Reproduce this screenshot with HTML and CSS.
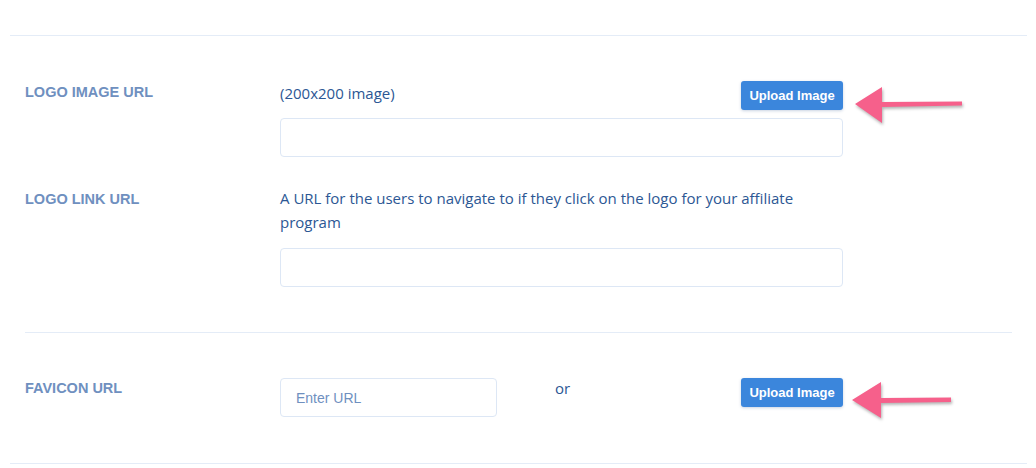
FILE: index.html
```html
<!DOCTYPE html>
<html lang="en">
<head>
    <meta charset="UTF-8">
    <meta name="viewport" content="width=device-width, initial-scale=1.0">
    <title>Branding Settings</title>
    <link rel="stylesheet" href="styles.css">
</head>
<body>
    <div class="page">
      <div class="group">
        <div class="field field-logo">
          <label class="label">LOGO IMAGE URL</label>
          <div class="content">
            <div class="head-row">
              <span class="desc">(200x200 image)</span>
              <button class="upload">Upload Image</button>
            </div>
            <input class="text-input" type="text">
          </div>
          <svg class="arrow arrow-one" width="116" height="44" viewBox="0 0 116 44">
            <polygon points="5,20 32,3 32,18 112,17.5 112,21.5 32,23 32,39"/>
          </svg>
        </div>

        <div class="field field-link">
          <label class="label">LOGO LINK URL</label>
          <div class="content">
            <p class="desc">A URL for the users to navigate to if they click on the logo for your affiliate program</p>
            <input class="text-input" type="text">
          </div>
        </div>
      </div>

      <div class="group last">
        <div class="field field-favicon">
          <label class="label">FAVICON URL</label>
          <div class="content inline">
            <input class="text-input short" type="text" placeholder="Enter URL">
            <span class="desc or">or</span>
            <button class="upload">Upload Image</button>
          </div>
          <svg class="arrow arrow-two" width="110" height="44" viewBox="0 0 110 44">
            <polygon points="4,22 33,4 33,20 103,19.5 103,24 33,25 33,40"/>
          </svg>
        </div>
      </div>
    </div>
</body>
</html>
```

FILE: styles.css
```css
*{
  box-sizing: border-box;
}
body{
  margin: 0;
  background: #ffffff;
  font-family: "Open Sans", "Liberation Sans", sans-serif;
}
.page{
  margin: 35px 9px 0 10px;
  border-top: 1px solid #e4ecf7;
  border-bottom: 1px solid #e4ecf7;
}
.group{
  margin: 0 15px;
  padding: 45px 0 45px;
  border-bottom: 1px solid #e4ecf7;
}
.group.last{
  border-bottom: none;
  padding-bottom: 46px;
}
.field{
  position: relative;
  display: grid;
  grid-template-columns: 255px 563px;
}
.field-link{
  margin-top: 29px;
}
.label{
  font-family: "Liberation Sans", Arial, sans-serif;
  font-weight: bold;
  font-size: 14.5px;
  line-height: 20px;
  color: #6f90bf;
}
.field-logo .label{
  padding-top: 1px;
}
.field-link .label{
  padding-top: 3px;
}
.head-row{
  display: flex;
  justify-content: space-between;
  align-items: flex-start;
}
.desc{
  margin: 0;
  font-size: 15px;
  line-height: 24px;
  color: #2c5794;
}
.upload{
  font-family: "Liberation Sans", Arial, sans-serif;
  font-weight: bold;
  font-size: 13px;
  line-height: 15px;
  padding: 7px 8px;
  width: 102px;
  color: #ffffff;
  background: #3b86dc;
  border: none;
  border-radius: 3px;
  box-shadow: 0 1px 3px rgba(40, 80, 140, 0.25);
}
.text-input{
  display: block;
  width: 563px;
  height: 39px;
  margin-top: 8px;
  padding: 0 15px;
  border: 1px solid #dde7f5;
  border-radius: 4px;
  font-family: "Liberation Sans", Arial, sans-serif;
  font-size: 14px;
  color: #2c5794;
  background: #ffffff;
}
.field-link .text-input{
  margin-top: 14px;
}
.text-input::placeholder{
  color: #6f90bf;
}
.content.inline{
  display: flex;
  align-items: flex-start;
}
.text-input.short{
  width: 217px;
  margin-top: 0;
}
.or{
  margin-left: 58px;
  line-height: 20px;
}
.content.inline .upload{
  margin-left: auto;
}
.arrow{
  position: absolute;
  fill: #f6608b;
  filter: drop-shadow(1px 2px 1.5px rgba(0, 0, 0, 0.3));
}
.arrow-one{
  left: 825px;
  top: 3px;
}
.arrow-two{
  left: 823px;
  top: 0;
}
```
